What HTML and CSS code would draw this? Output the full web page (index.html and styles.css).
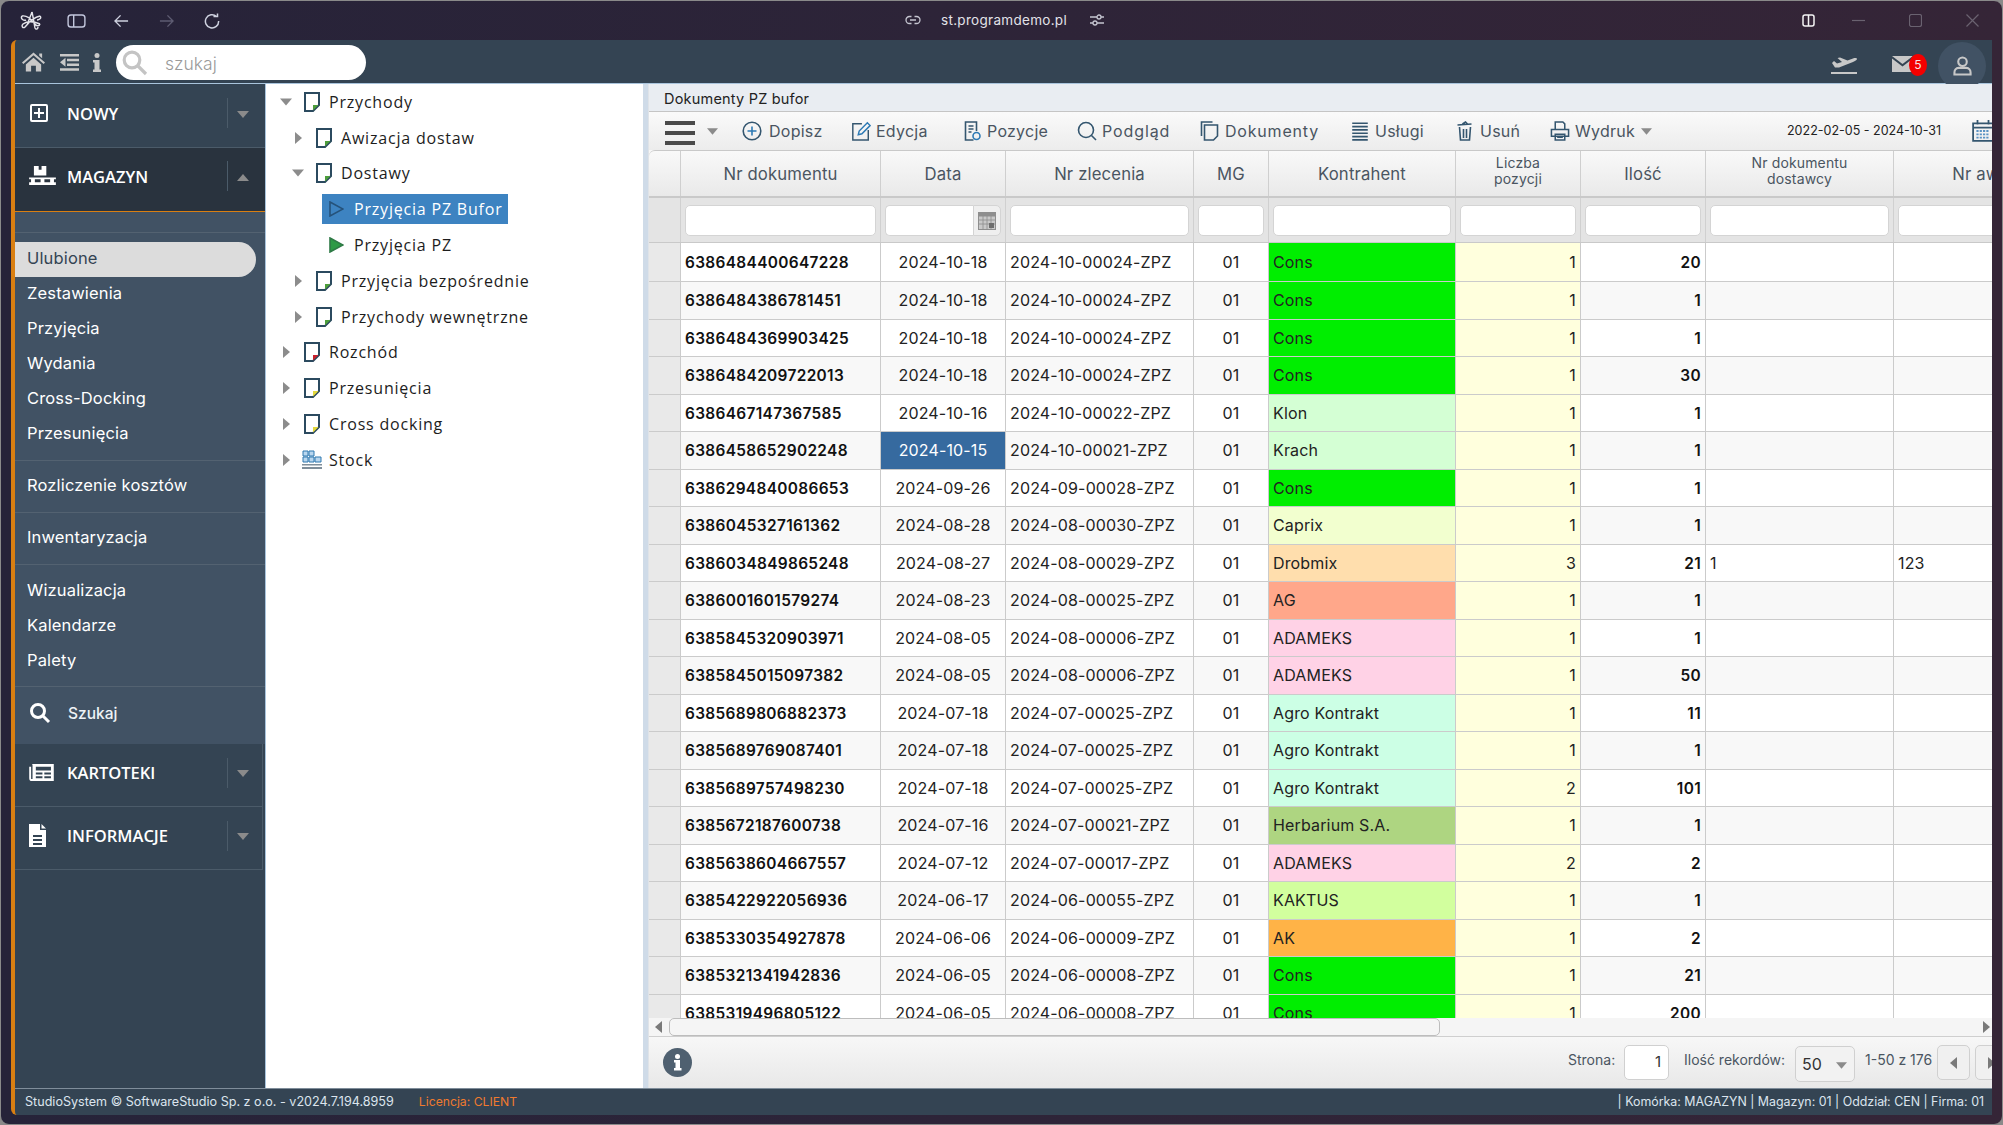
FILE: index.html
```html
<!DOCTYPE html>
<html lang="pl">
<head>
    <meta charset="UTF-8">
    <title>StudioSystem</title>
    <link rel="stylesheet" href="styles.css">
</head>
<body>
<svg class="sprite" width="0" height="0">
    <symbol id="doc" viewBox="0 0 16 20">
        <path d="M1 1H15V13L9 19H1Z" fill="#fff" stroke="#2b4a5f" stroke-width="2"/>
        <path d="M14.500 13L9 18.500V13Z" fill="currentColor"/>
    </symbol>
    <symbol id="tri-down" viewBox="0 0 12 7"><path d="M0 0H12L6 7Z" fill="currentColor"/></symbol>
    <symbol id="tri-up" viewBox="0 0 12 7"><path d="M0 7H12L6 0Z" fill="currentColor"/></symbol>
    <symbol id="tri-right" viewBox="0 0 7 12"><path d="M0 0V12L7 6Z" fill="currentColor"/></symbol>
</svg>

<div class="window">
    <div class="titlebar">
        <div class="tb-left">
            <svg class="tb-icon logo" viewBox="0 0 22 20"><path d="M2 5C7 4 11 8 14 12C16 15 19 16 20 13M20 5C15 6 9 11 5 16C3 18 1 15 3 13C7 10 13 10 20 13M12 1L7 14M12 1C13 5 14 12 15 17C16 19 18 18 18 16M2 5C0 8 4 10 6 9M20 5C22 7 19 9 17 9"/></svg>
            <svg class="tb-icon panel" viewBox="0 0 20 15"><rect x="1" y="1" width="18" height="13" rx="3"/><path d="M7 1V14"/></svg>
            <svg class="tb-icon nav" viewBox="0 0 16 14"><path d="M15 7H1M7 1L1 7L7 13"/></svg>
            <svg class="tb-icon nav off" viewBox="0 0 16 14"><path d="M1 7H15M9 1L15 7L9 13"/></svg>
            <svg class="tb-icon nav" viewBox="0 0 16 16"><path d="M12.5 3.5A6.6 6.6 0 1 0 14.6 8M9.5 3.5H13.5V.5"/></svg>
        </div>
        <div class="tb-url">
            <svg class="tb-icon small" viewBox="0 0 16 10"><path d="M6.5 1.5H4.5A3.5 3.5 0 0 0 4.5 8.5H6.5M9.5 1.5H11.5A3.5 3.5 0 0 1 11.5 8.5H9.5M5 5H11"/></svg>
            <span>st.programdemo.pl</span>
            <svg class="tb-icon small" viewBox="0 0 16 12"><path d="M1 3H8M12 3H15M1 9H4M8 9H15"/><circle cx="10" cy="3" r="2"/><circle cx="6" cy="9" r="2"/></svg>
        </div>
        <div class="tb-right">
            <svg class="tb-icon split" viewBox="0 0 13 13"><rect x="1" y="1" width="11" height="11" rx="2"/><path d="M6.5 1V12"/></svg>
            <svg class="tb-icon ctl" viewBox="0 0 13 13"><path d="M0 6.5H13"/></svg>
            <svg class="tb-icon ctl" viewBox="0 0 13 13"><rect x=".5" y=".5" width="12" height="12" rx="2"/></svg>
            <svg class="tb-icon ctl" viewBox="0 0 13 13"><path d="M.5 .5L12.5 12.5M12.5 .5L.5 12.5"/></svg>
        </div>
    </div>

    <div class="app">
        <header class="topbar">
            <svg class="top-icon home" viewBox="0 0 24 20"><path d="M12 0L24 10.5L22.6 12L12 3L1.400 12L0 10.500ZM18 1H21V6L18 3.500ZM4 12.500L12 5.500L20 12.500V20H14.500V14H9.500V20H4Z"/></svg>
            <svg class="top-icon outdent" viewBox="0 0 19 17"><path d="M0 0H19V2.500H0ZM7 4.700H19V7.200H7ZM7 9.400H19V11.900H7ZM0 14.300H19V16.800H0ZM5.500 3.700V12.800L0 8.300Z"/></svg>
            <svg class="top-icon info" viewBox="0 0 8 19"><circle cx="4" cy="2.500" r="2.500"/><path d="M0 7H6.500V16.500H8V19H0V16.500H1.500V9.500H0Z"/></svg>
            <div class="search">
                <svg class="search-icon" viewBox="0 0 26 26"><circle cx="10" cy="10" r="7.800"/><path d="M16 16L24 24"/></svg>
                <span>szukaj</span>
            </div>
            <div class="top-right">
                <svg class="top-icon plane" viewBox="0 0 26 19"><path d="M0 17H26V19H0ZM3 6L6 8.500L11 7L6.500 3L9 2.500L16.500 5.500L22 3.500C24 2.800 26 3 26 4C26 5 24 6 22 7L8 12.500L4 12.500L1 8Z"/></svg>
                <div class="mail">
                    <svg class="top-icon envelope" viewBox="0 0 21 16"><path d="M0 0H21L10.500 8ZM0 2.500L10.500 10.500L21 2.500V16H0Z"/></svg>
                    <span class="badge">5</span>
                </div>
                <div class="avatar">
                    <svg viewBox="0 0 20 21"><circle cx="10" cy="6" r="4.500"/><path d="M6 12.500H14C17 12.500 18.500 15 18.500 17.500V19.500H1.500V17.500C1.500 15 3 12.500 6 12.500Z"/></svg>
                </div>
            </div>
        </header>

        <div class="body">
            <nav class="sidebar">
                <div class="section">
                    <svg class="sec-icon" viewBox="0 0 20 20"><path d="M3 1H17A2 2 0 0 1 19 3V17A2 2 0 0 1 17 19H3A2 2 0 0 1 1 17V3A2 2 0 0 1 3 1ZM3 3V17H17V3ZM9 5H11V9H15V11H11V15H9V11H5V9H9Z" fill-rule="evenodd"/></svg>
                    <span class="sec-label">NOWY</span>
                    <span class="sec-arrow"><svg viewBox="0 0 12 7"><use href="#tri-down"/></svg></span>
                </div>
                <div class="section open">
                    <svg class="sec-icon pallet" viewBox="0 0 28 22"><path d="M5 0H10V4H13V0H18V10H5ZM0 12H28V14H0ZM2 14H6V17H2ZM12 14H16V17H12ZM22 14H26V17H22ZM0 17H28V20H0Z"/></svg>
                    <span class="sec-label">MAGAZYN</span>
                    <span class="sec-arrow"><svg viewBox="0 0 12 7"><use href="#tri-up"/></svg></span>
                </div>
                <div class="submenu">
                    <ul class="group">
                        <li class="active">Ulubione</li>
                        <li>Zestawienia</li>
                        <li>Przyjęcia</li>
                        <li>Wydania</li>
                        <li>Cross-Docking</li>
                        <li>Przesunięcia</li>
                    </ul>
                    <ul class="group"><li>Rozliczenie kosztów</li></ul>
                    <ul class="group"><li>Inwentaryzacja</li></ul>
                    <ul class="group last">
                        <li>Wizualizacja</li>
                        <li>Kalendarze</li>
                        <li>Palety</li>
                    </ul>
                    <div class="find">
                        <svg viewBox="0 0 22 22"><circle cx="9" cy="9" r="6.500"/><path d="M14 14L20 20"/></svg>
                        <span>Szukaj</span>
                    </div>
                </div>
                <div class="section low">
                    <svg class="sec-icon news" viewBox="0 0 26 18"><path d="M3 0H26V18H3C1 18 0 17 0 15V3H2V16H3.500V1ZM7 3H23V7H7ZM7 9H14V11H7ZM16 9H23V11H16ZM7 13H14V15H7ZM16 13H23V15H16Z" fill-rule="evenodd"/></svg>
                    <span class="sec-label">KARTOTEKI</span>
                    <span class="sec-arrow"><svg viewBox="0 0 12 7"><use href="#tri-down"/></svg></span>
                </div>
                <div class="section low">
                    <svg class="sec-icon file" viewBox="0 0 17 23"><path d="M0 0H11V6H17V23H0ZM4 11V13H13V11ZM4 15V17H13V15ZM4 19V21H13V19ZM12.500 0L17 4.500H12.500Z" fill-rule="evenodd"/></svg>
                    <span class="sec-label">INFORMACJE</span>
                    <span class="sec-arrow"><svg viewBox="0 0 12 7"><use href="#tri-down"/></svg></span>
                </div>
            </nav>

            <aside class="tree">
                <div class="node"><svg class="twist down"><use href="#tri-down"/></svg><svg class="doc green"><use href="#doc"/></svg>Przychody</div>
                <div class="node lvl1"><svg class="twist right"><use href="#tri-right"/></svg><svg class="doc green"><use href="#doc"/></svg>Awizacja dostaw</div>
                <div class="node lvl1"><svg class="twist down"><use href="#tri-down"/></svg><svg class="doc green"><use href="#doc"/></svg>Dostawy</div>
                <div class="node lvl2 selected"><svg class="play" viewBox="0 0 15 16"><path d="M1 1L14 8L1 15Z"/></svg><span>Przyjęcia PZ Bufor</span></div>
                <div class="node lvl2"><svg class="play solid" viewBox="0 0 15 16"><path d="M1 1L14 8L1 15Z"/></svg><span>Przyjęcia PZ</span></div>
                <div class="node lvl1"><svg class="twist right"><use href="#tri-right"/></svg><svg class="doc green"><use href="#doc"/></svg>Przyjęcia bezpośrednie</div>
                <div class="node lvl1"><svg class="twist right"><use href="#tri-right"/></svg><svg class="doc green"><use href="#doc"/></svg>Przychody wewnętrzne</div>
                <div class="node"><svg class="twist right"><use href="#tri-right"/></svg><svg class="doc red"><use href="#doc"/></svg>Rozchód</div>
                <div class="node"><svg class="twist right"><use href="#tri-right"/></svg><svg class="doc yellow"><use href="#doc"/></svg>Przesunięcia</div>
                <div class="node"><svg class="twist right"><use href="#tri-right"/></svg><svg class="doc yellow"><use href="#doc"/></svg>Cross docking</div>
                <div class="node"><svg class="twist right"><use href="#tri-right"/></svg><svg class="stock" viewBox="0 0 20 19"><path d="M1 1H6V6H1ZM7 1H12V6H7ZM1 7H6V12H1ZM7 7H12V12H7ZM13 7H19V12H13Z" fill="#b9d6ee" stroke="#2f78b0"/><path d="M0 14H20V15.500H0ZM0 17H20V19H0Z" fill="#7f8e9a"/></svg>Stock</div>
            </aside>

            <main class="content">
                <div class="panel-title">Dokumenty PZ bufor</div>
                <div class="toolbar">
                    <div class="burger"><i></i><i></i><i></i></div>
                    <svg class="tool-arrow"><use href="#tri-down"/></svg>
                    <button class="tool tool-dopisz"><svg viewBox="0 0 20 20"><circle cx="10" cy="10" r="8.800"/><path d="M10 5.500V14.500M5.500 10H14.500" class="blue"/></svg>Dopisz</button>
                    <button class="tool tool-edycja"><svg viewBox="0 0 22 22"><path d="M12 3H2V21H19V10"/><path d="M8 15L9 11L18 2L21 5L12 14Z" class="blue"/></svg>Edycja</button>
                    <button class="tool tool-pozycje"><svg viewBox="0 0 17 20"><path d="M10 19H2V1H13V10M5 5H10M5 8H10M5 11H8"/><circle cx="13" cy="15" r="3.500" class="blue"/></svg>Pozycje</button>
                    <button class="tool tool-podglad"><svg viewBox="0 0 20 20"><circle cx="9" cy="9" r="7.500"/><path d="M14.500 14.500L19 19"/></svg>Podgląd</button>
                    <button class="tool tool-dok"><svg viewBox="0 0 19 20"><path d="M1 15V1H12M4 4H17V15L13 19H4Z"/></svg>Dokumenty</button>
                    <button class="tool tool-uslugi"><svg viewBox="0 0 16 18"><path d="M1 2H15M1 5H15M1 8H15M1 11H15M1 14H15M1 17H15" class="thin"/></svg>Usługi</button>
                    <button class="tool tool-usun"><svg viewBox="0 0 17 20"><path d="M3 6L4 19H13L14 6M1 4L15 3M6 3L9 1L11 3M7 8V17M10 8V17"/></svg>Usuń</button>
                    <button class="tool tool-wydruk"><svg viewBox="0 0 20 21"><path d="M5 9V1H13L15 3V9M1 9H19V16H1ZM5 14V20H15V14ZM7 17H13"/></svg>Wydruk<svg class="tool-arrow after"><use href="#tri-down"/></svg></button>
                    <span class="daterange">2022-02-05 - 2024-10-31</span>
                    <svg class="tool-cal" viewBox="0 0 20 20"><path d="M1 3H19V19H1ZM1 7H19M5 0V4M15 0V4"/><path d="M4 10H16M4 13H16M4 16H16" class="blue"/></svg>
                </div>

                <div class="grid">
                    <div class="head">
                        <div class="corner"></div>
                        <div>Nr dokumentu</div>
                        <div>Data</div>
                        <div>Nr zlecenia</div>
                        <div>MG</div>
                        <div>Kontrahent</div>
                        <div class="two">Liczba<br>pozycji</div>
                        <div>Ilość</div>
                        <div class="two">Nr dokumentu<br>dostawcy</div>
                        <div>Nr awizacji</div>
                    </div>
                    <div class="filters">
                        <div class="corner"></div>
                        <div><input type="text"></div>
                        <div class="date-filter"><input type="text"><span class="cal-btn"><svg viewBox="0 0 18 18"><path d="M0 0H18V18H0Z" fill="#8e8e8e"/><path d="M1 4.500H17V17H1Z" fill="#c9c9c9"/><path d="M5 4V18M9 4V18M13 4V18M1 8H17M1 12H17" stroke="#8e8e8e" stroke-width=".8"/><path d="M11 11H16V16H11Z" fill="#6d6d6d"/></svg></span></div>
                        <div><input type="text"></div>
                        <div><input type="text"></div>
                        <div><input type="text"></div>
                        <div><input type="text"></div>
                        <div><input type="text"></div>
                        <div><input type="text"></div>
                        <div><input type="text"></div>
                    </div>
                    <div class="rows">
                        <div class="row first"><i></i><b>6386484400647228</b><span class="c">2024-10-18</span><span>2024-10-00024-ZPZ</span><span class="c">01</span><span class="k-cons">Cons</span><span class="lp">1</span><b class="r">20</b><span></span><span></span></div>
                        <div class="row"><i></i><b>6386484386781451</b><span class="c">2024-10-18</span><span>2024-10-00024-ZPZ</span><span class="c">01</span><span class="k-cons">Cons</span><span class="lp">1</span><b class="r">1</b><span></span><span></span></div>
                        <div class="row"><i></i><b>6386484369903425</b><span class="c">2024-10-18</span><span>2024-10-00024-ZPZ</span><span class="c">01</span><span class="k-cons">Cons</span><span class="lp">1</span><b class="r">1</b><span></span><span></span></div>
                        <div class="row"><i></i><b>6386484209722013</b><span class="c">2024-10-18</span><span>2024-10-00024-ZPZ</span><span class="c">01</span><span class="k-cons">Cons</span><span class="lp">1</span><b class="r">30</b><span></span><span></span></div>
                        <div class="row"><i></i><b>6386467147367585</b><span class="c">2024-10-16</span><span>2024-10-00022-ZPZ</span><span class="c">01</span><span class="k-klon">Klon</span><span class="lp">1</span><b class="r">1</b><span></span><span></span></div>
                        <div class="row"><i></i><b>6386458652902248</b><span class="c sel">2024-10-15</span><span>2024-10-00021-ZPZ</span><span class="c">01</span><span class="k-klon">Krach</span><span class="lp">1</span><b class="r">1</b><span></span><span></span></div>
                        <div class="row"><i></i><b>6386294840086653</b><span class="c">2024-09-26</span><span>2024-09-00028-ZPZ</span><span class="c">01</span><span class="k-cons">Cons</span><span class="lp">1</span><b class="r">1</b><span></span><span></span></div>
                        <div class="row"><i></i><b>6386045327161362</b><span class="c">2024-08-28</span><span>2024-08-00030-ZPZ</span><span class="c">01</span><span class="k-caprix">Caprix</span><span class="lp">1</span><b class="r">1</b><span></span><span></span></div>
                        <div class="row"><i></i><b>6386034849865248</b><span class="c">2024-08-27</span><span>2024-08-00029-ZPZ</span><span class="c">01</span><span class="k-drobmix">Drobmix</span><span class="lp">3</span><b class="r">21</b><span>1</span><span>123</span></div>
                        <div class="row"><i></i><b>6386001601579274</b><span class="c">2024-08-23</span><span>2024-08-00025-ZPZ</span><span class="c">01</span><span class="k-ag">AG</span><span class="lp">1</span><b class="r">1</b><span></span><span></span></div>
                        <div class="row"><i></i><b>6385845320903971</b><span class="c">2024-08-05</span><span>2024-08-00006-ZPZ</span><span class="c">01</span><span class="k-adameks">ADAMEKS</span><span class="lp">1</span><b class="r">1</b><span></span><span></span></div>
                        <div class="row"><i></i><b>6385845015097382</b><span class="c">2024-08-05</span><span>2024-08-00006-ZPZ</span><span class="c">01</span><span class="k-adameks">ADAMEKS</span><span class="lp">1</span><b class="r">50</b><span></span><span></span></div>
                        <div class="row"><i></i><b>6385689806882373</b><span class="c">2024-07-18</span><span>2024-07-00025-ZPZ</span><span class="c">01</span><span class="k-agro">Agro Kontrakt</span><span class="lp">1</span><b class="r">11</b><span></span><span></span></div>
                        <div class="row"><i></i><b>6385689769087401</b><span class="c">2024-07-18</span><span>2024-07-00025-ZPZ</span><span class="c">01</span><span class="k-agro">Agro Kontrakt</span><span class="lp">1</span><b class="r">1</b><span></span><span></span></div>
                        <div class="row"><i></i><b>6385689757498230</b><span class="c">2024-07-18</span><span>2024-07-00025-ZPZ</span><span class="c">01</span><span class="k-agro">Agro Kontrakt</span><span class="lp">2</span><b class="r">101</b><span></span><span></span></div>
                        <div class="row"><i></i><b>6385672187600738</b><span class="c">2024-07-16</span><span>2024-07-00021-ZPZ</span><span class="c">01</span><span class="k-herb">Herbarium S.A.</span><span class="lp">1</span><b class="r">1</b><span></span><span></span></div>
                        <div class="row"><i></i><b>6385638604667557</b><span class="c">2024-07-12</span><span>2024-07-00017-ZPZ</span><span class="c">01</span><span class="k-adameks">ADAMEKS</span><span class="lp">2</span><b class="r">2</b><span></span><span></span></div>
                        <div class="row"><i></i><b>6385422922056936</b><span class="c">2024-06-17</span><span>2024-06-00055-ZPZ</span><span class="c">01</span><span class="k-kaktus">KAKTUS</span><span class="lp">1</span><b class="r">1</b><span></span><span></span></div>
                        <div class="row"><i></i><b>6385330354927878</b><span class="c">2024-06-06</span><span>2024-06-00009-ZPZ</span><span class="c">01</span><span class="k-ak">AK</span><span class="lp">1</span><b class="r">2</b><span></span><span></span></div>
                        <div class="row"><i></i><b>6385321341942836</b><span class="c">2024-06-05</span><span>2024-06-00008-ZPZ</span><span class="c">01</span><span class="k-cons">Cons</span><span class="lp">1</span><b class="r">21</b><span></span><span></span></div>
                        <div class="row"><i></i><b>6385319496805122</b><span class="c">2024-06-05</span><span>2024-06-00008-ZPZ</span><span class="c">01</span><span class="k-cons">Cons</span><span class="lp">1</span><b class="r">200</b><span></span><span></span></div>
                    </div>
                    <div class="hscroll">
                        <svg class="sb-arrow"><use href="#tri-right"/></svg>
                        <div class="thumb"></div>
                        <svg class="sb-arrow end"><use href="#tri-right"/></svg>
                    </div>
                </div>

                <div class="pager">
                    <svg class="info-dot" viewBox="0 0 29 29"><circle cx="14.500" cy="14.500" r="14.500"/><circle cx="14.500" cy="8.500" r="2.500" class="w"/><path d="M11 12H17V20H18.500V22.500H11V20H12.500V14.500H11Z" class="w"/></svg>
                    <span class="pg-label pg-strona">Strona:</span>
                    <span class="pg-input">1</span>
                    <span class="pg-label pg-ilosc">Ilość rekordów:</span>
                    <span class="pg-select">50<svg><use href="#tri-down"/></svg></span>
                    <span class="pg-label pg-count">1-50 z 176</span>
                    <span class="pg-btn"><svg><use href="#tri-right"/></svg></span>
                    <span class="pg-btn next"><svg><use href="#tri-right"/></svg></span>
                </div>
            </main>
        </div>

        <footer class="status">
            <span class="st-copy">StudioSystem © SoftwareStudio Sp. z o.o. - v2024.7.194.8959</span>
            <span class="st-lic">Licencja: CLIENT</span>
            <span class="st-right">| Komórka: MAGAZYN | Magazyn: 01 | Oddział: CEN | Firma: 01</span>
        </footer>
    </div>
</div>
</body>
</html>
```

FILE: styles.css
```css
* {
    box-sizing: border-box;
}
html, body {
    margin: 0;
    height: 100%;
    overflow: hidden;
    background: #8a8a8a;
}
body {
    font-family: Inter, "Liberation Sans", sans-serif;
    font-size: 15px;
    color: #222;
}
.sprite {
    position: absolute;
}
.window {
    height: 1125px;
    display: flex;
    flex-direction: column;
    border: 1px solid #8a8a8a;
    border-radius: 9px;
    background: linear-gradient(90deg, #262339, #352537);
}

/* title bar */
.titlebar {
    height: 39px;
    flex: none;
    display: flex;
    align-items: center;
    position: relative;
    color: #d8d8e0;
}
.tb-icon {
    fill: none;
    stroke: #cfd2e0;
    stroke-width: 1.5;
    flex: none;
}
.tb-left {
    display: flex;
    align-items: center;
    padding-left: 19px;
}
.logo { width: 22px; height: 20px; stroke-width: 1.4; stroke: #e4e4ea; }
.panel { width: 19px; height: 14px; margin-left: 25px; stroke: #c3c7dd; }
.nav { width: 15px; height: 14px; margin-left: 28px; }
.nav.off { stroke: #5e5c72; margin-left: 30px; }
.nav:last-child { margin-left: 30px; width: 16px; height: 16px; }
.tb-url {
    margin: 0 0 2px 685px;
    display: flex;
    align-items: center;
    font-size: 13.500px;
    color: #e2e2e8;
    letter-spacing: .3px;
}
.tb-url span { margin: 0 22px 0 20px; }
.small { width: 16px; height: 12px; stroke: #c5c5d0; stroke-width: 1.3; }
.tb-right {
    margin-left: auto;
    display: flex;
    align-items: center;
    padding-right: 23px;
}
.split { width: 13px; height: 13px; margin-right: 37px; stroke: #f4f4f4; }
.ctl { width: 13px; height: 13px; margin-left: 44px; stroke: #6a6270; stroke-width: 1.2; }
.split + .ctl { margin-left: 0; }

/* app frame */
.app {
    flex: 1;
    min-height: 0;
    margin: 0 10px 9px 10px;
    border-left: 4px solid #d97f12;
    border-radius: 6px 0 0 6px;
    display: flex;
    flex-direction: column;
    overflow: hidden;
    background: #344453;
}
.topbar {
    height: 44px;
    flex: none;
    display: flex;
    align-items: center;
    padding-top: 1px;
    background: #344453;
    border-bottom: 1px solid #a9c4dc;
}
.top-icon { fill: #c8c8c8; flex: none; }
.home { width: 23px; height: 20px; margin-left: 7px; }
.outdent { width: 19px; height: 17px; margin-left: 15px; }
.info { width: 8px; height: 19px; margin-left: 14px; }
.search {
    width: 250px;
    height: 35px;
    margin-left: 15px;
    background: #fff;
    border-radius: 18px;
    display: flex;
    align-items: center;
    font-size: 17.500px;
    font-weight: 300;
    color: #9a9a9a;
}
.search span { padding-top: 3px; margin-left: -1px; }
.search-icon {
    width: 26px;
    height: 26px;
    margin: 2px 18px 0 6px;
    fill: none;
    stroke: #c4c4c4;
    stroke-width: 3.2;
}
.top-right {
    margin-left: auto;
    display: flex;
    align-items: center;
}
.plane { width: 26px; height: 19px; margin: 4px 35px 0 0; }
.mail { position: relative; margin: 3px 25px 0 0; height: 16px; }
.envelope { width: 21px; height: 16px; display: block; }
.badge {
    position: absolute;
    left: 17px;
    top: -2px;
    width: 18px;
    height: 22px;
    border-radius: 50%;
    background: #f40000;
    color: #f6e5e5;
    font-size: 12px;
    line-height: 22px;
    text-align: center;
}
.avatar {
    width: 48px;
    height: 48px;
    margin: 4px 6px -4px 0;
    border-radius: 50%;
    background: #415264;
    display: flex;
    align-items: center;
    justify-content: center;
}
.avatar svg {
    width: 19px;
    height: 20px;
    fill: none;
    stroke: #c8c8c8;
    stroke-width: 2.2;
}

.body {
    flex: 1;
    min-height: 0;
    display: flex;
}

/* left menu */
.sidebar {
    width: 251px;
    flex: none;
    background: #344453;
    border-right: 1px solid #a9c4dc;
}
.section {
    height: 64px;
    display: flex;
    align-items: center;
    padding: 0 0 5px 14px;
    border-bottom: 1px solid #4b5b69;
    color: #fff;
    font-family: "Open Sans", sans-serif;
    font-size: 16.500px;
    font-weight: 600;
}
.section.open {
    padding-bottom: 7px;
    background: #29333e;
    border-bottom: 1px solid #d97f12;
}
.section.low {
    height: 63px;
    width: 248px;
    border-right: 1px solid #4b5b69;
}
.sec-icon {
    width: 20px;
    height: 20px;
    margin-right: 18px;
    fill: #fff;
    flex: none;
}
.sec-icon.pallet { width: 27px; height: 21px; margin-right: 11px; }
.sec-icon.news { width: 25px; height: 17px; margin-right: 13px; }
.sec-icon.file { width: 17px; height: 23px; margin-right: 21px; }
.sec-label { flex: 1; }
.sec-arrow {
    width: 30px;
    height: 30px;
    margin-right: 8px;
    border-left: 1px solid #4b5b69;
    display: flex;
    align-items: center;
    justify-content: center;
    color: #8b8b8b;
}
.section.low .sec-arrow { margin-right: 5px; }
.sec-arrow svg { width: 12px; height: 7px; margin-top: 2px; }
.submenu { background: #415264; padding-top: 20px; }
.group {
    list-style: none;
    margin: 0;
    padding: 8px 0;
    border-bottom: 1px solid #536271;
}
.group:first-child { padding-top: 9px; border-top: 1px solid #536271; }
.group.last { padding: 9px 0 7px; }
.group li {
    height: 35px;
    line-height: 33px;
    padding-left: 12px;
    font-size: 16.500px;
    color: #fff;
    letter-spacing: .15px;
}
.group li.active {
    width: 241px;
    background: #dcdcdc;
    color: #344453;
    border-radius: 0 18px 18px 0;
}
.find {
    height: 57px;
    display: flex;
    align-items: center;
    padding: 0 0 5px 14px;
    color: #eef2f6;
    font-size: 15.500px;
    font-weight: 500;
}
.find svg {
    width: 22px;
    height: 22px;
    margin-right: 17px;
    fill: none;
    stroke: #fff;
    stroke-width: 3;
}

/* tree */
.tree {
    width: 382px;
    flex: none;
    background: #fff;
    font-family: "Open Sans", sans-serif;
    font-size: 16px;
    letter-spacing: .8px;
    color: #1d1d1d;
    border-right: 5px solid #cfdbe8;
}
.node {
    height: 35.800px;
    display: flex;
    align-items: center;
    padding-left: 14px;
}
.lvl1 { padding-left: 26px; }
.lvl2 { padding-left: 56px; }
.twist {
    width: 12px;
    height: 12px;
    flex: none;
    color: #8c8c8c;
}
.twist.right { width: 7px; margin-left: 3px; margin-right: 2px; }
.doc {
    width: 16px;
    height: 20px;
    margin: 0 9px 0 12px;
    flex: none;
}
.doc.green { color: #4d9e3b; }
.doc.red { color: #c9202c; }
.doc.yellow { color: #e3d83c; }
.stock { width: 20px; height: 19px; margin: 0 7px 0 10px; flex: none; }
.play {
    width: 15px;
    height: 16px;
    flex: none;
    margin: 0 10px 0 7px;
    fill: none;
    stroke: #25527a;
    stroke-width: 1.6;
}
.play.solid { fill: #2e9a46; stroke: #2f7a46; }
.selected {
    width: 242px;
    position: relative;
}
.selected::before {
    content: "";
    position: absolute;
    left: 56px;
    top: 3px;
    bottom: 3px;
    width: 186px;
    background: #3d83c1;
}
.selected svg, .selected span { position: relative; }
.selected span { color: #fff; }

/* main */
.content {
    flex: 1;
    min-width: 0;
    display: flex;
    flex-direction: column;
    background: #f0f0f0;
    overflow: hidden;
    border-left: 1px solid #dfe3e8;
}
.panel-title {
    height: 28px;
    flex: none;
    background: #e9edf2;
    border-bottom: 1px solid #c5c5c5;
    padding: 6px 0 0 15px;
    font-size: 14.500px;
    letter-spacing: .2px;
    color: #222;
}
.toolbar {
    height: 38px;
    flex: none;
    display: flex;
    align-items: center;
    background: linear-gradient(#fafafa, #ececec);
    padding-left: 16px;
    position: relative;
}
.burger {
    width: 30px;
    height: 24px;
    margin-top: 3px;
    display: flex;
    flex-direction: column;
    justify-content: space-between;
}
.burger i {
    height: 4px;
    background: #4a4a4a;
}
.tool-arrow {
    width: 11px;
    height: 7px;
    color: #8b8b8b;
    margin: 0 0 0 12px;
    flex: none;
}
.tool-arrow.after { margin-left: 6px; }
.tool {
    display: flex;
    align-items: center;
    height: 30px;
    padding: 0;
    border: 0;
    background: none;
    font: inherit;
    font-size: 16px;
    letter-spacing: .25px;
    color: #4a5561;
    white-space: nowrap;
}
.tool > svg:first-child {
    height: 20px;
    width: 20px;
    margin-right: 5px;
    fill: none;
    stroke: #34566f;
    stroke-width: 1.6;
    flex: none;
}
.tool-dopisz > svg:first-child { margin-right: 7px; }
.tool .blue { stroke: #2d7ab5; }
.tool .thin { stroke-width: 1.5; }
.tool-dopisz { margin-left: 24px; width: 109px; }
.tool-edycja { width: 111px; }
.tool-pozycje { width: 115px; }
.tool-podglad { width: 123px; letter-spacing: .9px; }
.tool-dok { width: 150px; letter-spacing: .8px; }
.tool-uslugi { width: 105px; }
.tool-usun { width: 95px; }
.tool-wydruk { width: 200px; }
.daterange {
    position: absolute;
    left: 1138px;
    top: 11px;
    font-size: 12.500px;
    color: #222;
    white-space: nowrap;
}
.tool-cal {
    position: absolute;
    left: 1323px;
    top: 8px;
    width: 22px;
    height: 22px;
    fill: none;
    stroke: #34566f;
    stroke-width: 1.6;
}
.tool-cal .blue { stroke: #5a93c4; stroke-dasharray: 2 1; }

/* data table */
.grid {
    flex: 1;
    min-height: 0;
    display: flex;
    flex-direction: column;
    overflow: hidden;
    background: #f7f7f7;
}
.head, .filters, .row {
    display: grid;
    grid-template-columns: 32px 200px 125px 188px 75px 187px 125px 125px 188px 206px;
    width: 1451px;
    flex: none;
}
.head {
    height: 48px;
    background: linear-gradient(#f9f9f9, #e9e9e9);
    border-top: 1px solid #c9c9c9;
    border-bottom: 2px solid #c9c9c9;
    border-radius: 6px 0 0 0;
    color: #4a5561;
    font-size: 16.700px;
    letter-spacing: .15px;
}
.head > div {
    display: flex;
    align-items: center;
    justify-content: center;
    text-align: center;
    padding-top: 1px;
    border-right: 1px solid #cfcfcf;
}
.head > .two {
    font-size: 14px;
    line-height: 16px;
    padding: 0 0 6px;
}
.filters {
    height: 45px;
    background: #e4e4e4;
    border-bottom: 1px solid #c9c9c9;
}
.filters > div {
    display: flex;
    padding: 7px 4px 6px;
    border-right: 1px solid #d0d0d0;
}
.filters input {
    flex: 1;
    width: 100%;
    min-width: 0;
    border: 1px solid #d4d4d4;
    border-radius: 5px;
    background: #fff;
    padding: 0;
    outline: none;
}
.date-filter input {
    border-radius: 5px 0 0 5px;
    border-right: 0;
}
.cal-btn {
    width: 28px;
    flex: none;
    display: flex;
    align-items: center;
    justify-content: center;
    background: #efefef;
    border: 1px solid #d4d4d4;
    border-radius: 0 5px 5px 0;
}
.cal-btn svg { width: 18px; height: 18px; }
.rows {
    flex: 1;
    min-height: 0;
    overflow: hidden;
}
.row {
    height: 37.500px;
    background: #f8f8f8;
    border-bottom: 1.500px solid #cbcbcb;
    font-size: 16px;
    color: #222;
    letter-spacing: .15px;
}
.row.first { height: 39px; }
.row:nth-child(odd) { background: #fff; }
.row > * {
    display: flex;
    align-items: center;
    padding: 0 4px;
    border-right: 1px solid #cbcbcb;
    white-space: nowrap;
    overflow: hidden;
}
.row > i { background: #e9e9e9; }
.row b { padding-top: 1px; font-size: 15.400px; font-weight: 600; color: #111; letter-spacing: .35px; }
.row .c { justify-content: center; }
.row .r { justify-content: flex-end; }
.row .sel { background: #366a9f; color: #fff; }
.row .lp { background: #ffffdd; justify-content: flex-end; }
.k-cons { background: #00ee00; }
.k-klon { background: #d4ffd4; }
.k-caprix { background: #f2ffcf; }
.k-drobmix { background: #ffdead; }
.k-ag { background: #ffa78a; }
.k-adameks { background: #ffd2e6; }
.k-agro { background: #ccffe5; }
.k-herb { background: #aed581; }
.k-kaktus { background: #d2ff9e; }
.k-ak { background: #ffb347; }
.hscroll {
    height: 19px;
    flex: none;
    background: #f5f5f5;
    display: flex;
    align-items: center;
    border-bottom: 1px solid #cfcfcf;
    padding-left: 6px;
}
.sb-arrow {
    width: 7px;
    height: 12px;
    color: #7a7a7a;
    transform: rotate(180deg);
    flex: none;
}
.sb-arrow.end { transform: none; margin-left: auto; margin-right: 2px; }
.thumb {
    width: 771px;
    height: 18px;
    margin-left: 7px;
    background: #f5f5f5;
    border: 1px solid #bdbdbd;
    border-radius: 5px;
    flex: none;
}

/* pager */
.pager {
    height: 51px;
    flex: none;
    display: flex;
    align-items: center;
    background: linear-gradient(#f7f7f7, #e8e8e8);
    padding-left: 14px;
    overflow: hidden;
}
.info-dot { width: 29px; height: 29px; fill: #4f6070; flex: none; }
.info-dot .w { fill: #fff; }
.pg-label {
    font-size: 14px;
    color: #4a5561;
    white-space: nowrap;
    flex: none;
    padding-bottom: 6px;
}
.pg-strona { margin-left: 876px; width: 56px; }
.pg-input {
    width: 45px;
    height: 35px;
    line-height: 32px;
    padding-right: 7px;
    margin-right: 15px;
    text-align: right;
    background: #fff;
    border: 1px solid #d0d0d0;
    border-radius: 5px;
    color: #333;
    flex: none;
}
.pg-ilosc { width: 111px; }
.pg-select {
    width: 60px;
    height: 36px;
    margin-top: 2px;
    padding: 7px 0 0 6px;
    background: #f2f2f2;
    border: 1px solid #d0d0d0;
    border-radius: 5px;
    font-size: 16px;
    color: #333;
    position: relative;
    flex: none;
}
.pg-select svg {
    position: absolute;
    right: 7px;
    top: 15px;
    width: 11px;
    height: 7px;
    color: #8b8b8b;
}
.pg-count { margin: 0 10px; width: 62px; }
.pg-btn {
    width: 33px;
    height: 35px;
    margin-right: 5px;
    background: #f0f0f0;
    border: 1px solid #d0d0d0;
    border-radius: 5px;
    display: flex;
    align-items: center;
    justify-content: center;
    flex: none;
    color: #7a7a7a;
}
.pg-btn svg { width: 7px; height: 12px; transform: rotate(180deg); }
.pg-btn.next svg { transform: none; }

/* status */
.status {
    height: 27px;
    flex: none;
    display: flex;
    align-items: center;
    background: #344453;
    border-top: 1px solid #7f8d9a;
    padding: 0 8px 2px 10px;
    font-size: 12.600px;
    color: #dce4ee;
    white-space: nowrap;
}
.st-lic { margin-left: 25px; color: #f07a2e; font-size: 12.200px; }
.st-right { margin-left: auto; font-size: 12.400px; }
```
